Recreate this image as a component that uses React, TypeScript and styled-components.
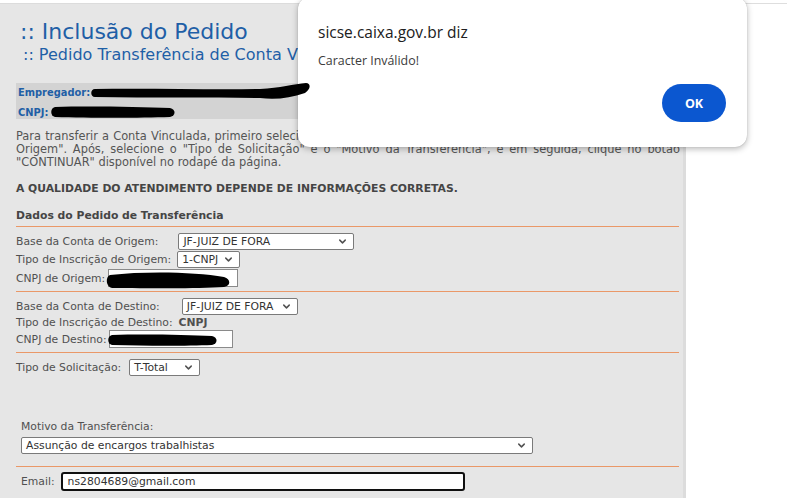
import React from "react";
import styled, { createGlobalStyle } from "styled-components";
import { ChevronDown } from "lucide-react";

const GlobalStyle = createGlobalStyle`
  html, body {
    margin: 0;
    padding: 0;
    background: #ffffff;
  }
  body {
    font-family: "DejaVu Sans", Verdana, sans-serif;
    overflow: hidden;
  }
`;

type SelectProps = { width: number; children: React.ReactNode };

const Select: React.FC<SelectProps> = ({ width, children }) => (
  <SelectBox $w={width}>
    <span>{children}</span>
    <ChevronDown size={11} strokeWidth={3.2} color="#505050" />
  </SelectBox>
);

const Redaction: React.FC<{ w: number; h: number; d: string; $left: number; $top: number }> = ({
  w,
  h,
  d,
  $left,
  $top,
}) => (
  <Scribble width={w} height={h} viewBox={`0 0 ${w} ${h}`} $left={$left} $top={$top}>
    <path d={d} fill="#000" />
  </Scribble>
);

export default function App() {
  return (
    <>
      <GlobalStyle />
      <Page>
        <Panel>
          <Header>
            <Title>:: Inclusão do Pedido</Title>
            <Subtitle>:: Pedido Transferência de Conta Vinculada</Subtitle>
          </Header>

          <Employer>
            <EmployerLine>Empregador:</EmployerLine>
            <EmployerLine>CNPJ:</EmployerLine>
            <Redaction
              w={220}
              h={20}
              $left={74}
              $top={-1}
              d="M5,7 C60,6 120,8 170,7 C190,6 204,2 216,1 C221,1 221,7 215,11 C200,16 186,18 170,16 C120,15 60,16 5,15 C0,15 0,7 5,7 Z"
            />
            <Redaction
              w={126}
              h={14}
              $left={34}
              $top={22}
              d="M5,2 C40,1 90,2 120,3 C126,4 126,11 120,12 C90,13 40,13 5,12 C0,11 0,3 5,2 Z"
            />
          </Employer>

          <Intro>
            <JustLine>
              Para transferir a Conta Vinculada, primeiro selecione a "Base da Conta de Origem", o "Tipo de Inscrição" e informe o "CNPJ de
            </JustLine>
            <JustLine>
              Origem". Após, selecione o "Tipo de Solicitação" e o "Motivo da Transferência", e em seguida, clique no botão
            </JustLine>
            <Line>"CONTINUAR" disponível no rodapé da página.</Line>
          </Intro>

          <Notice>A QUALIDADE DO ATENDIMENTO DEPENDE DE INFORMAÇÕES CORRETAS.</Notice>
          <SectionTitle>Dados do Pedido de Transferência</SectionTitle>
          <Rule />

          <Group>
            <Row $gap={20}>
              <Label>Base da Conta de Origem:</Label>
              <Select width={176}>JF-JUIZ DE FORA</Select>
            </Row>
            <Row $gap={6}>
              <Label>Tipo de Inscrição de Origem:</Label>
              <Select width={63}>1-CNPJ</Select>
            </Row>
            <Row $gap={3} $h={18}>
              <Label>CNPJ de Origem:</Label>
              <Field $w={130}>
                <Redaction
                  w={126}
                  h={18}
                  $left={-3}
                  $top={1}
                  d="M4,4 C40,0 90,1 118,6 C125,8 125,15 118,16 C90,18 40,17 6,17 C0,16 -1,6 4,4 Z"
                />
              </Field>
            </Row>
          </Group>
          <Rule />

          <Group>
            <Row $gap={22}>
              <Label>Base da Conta de Destino:</Label>
              <Select width={116}>JF-JUIZ DE FORA</Select>
            </Row>
            <Row $gap={6} $h={13}>
              <Label>Tipo de Inscrição de Destino:</Label>
              <Strong>CNPJ</Strong>
            </Row>
            <Row $gap={2} $h={18}>
              <Label>CNPJ de Destino:</Label>
              <Field $w={124}>
                <Redaction
                  w={110}
                  h={12}
                  $left={-3}
                  $top={3}
                  d="M5,1 C40,0 80,1 105,2 C111,3 111,10 105,11 C80,12 40,12 5,11 C0,10 0,2 5,1 Z"
                />
              </Field>
            </Row>
          </Group>
          <Rule />

          <Group>
            <Row $gap={8} $h={16}>
              <Label>Tipo de Solicitação:</Label>
              <Select width={71}>T-Total</Select>
            </Row>
          </Group>

          <Reason>
            <Label>Motivo da Transferência:</Label>
            <Select width={512}>Assunção de encargos trabalhistas</Select>
          </Reason>
          <Rule />

          <EmailRow>
            <Label>Email:</Label>
            <EmailInput>ns2804689@gmail.com</EmailInput>
          </EmailRow>
        </Panel>

        <Dialog>
          <DialogTitle>sicse.caixa.gov.br diz</DialogTitle>
          <DialogText>Caracter Inválido!</DialogText>
          <DialogActions>
            <OkButton>OK</OkButton>
          </DialogActions>
        </Dialog>
      </Page>
    </>
  );
}

const Page = styled.div`
  position: relative;
  width: 787px;
  height: 498px;
  padding-top: 3px;
  box-sizing: border-box;
  overflow: hidden;
`;

const Panel = styled.div`
  position: relative;
  width: 686px;
  min-height: 495px;
  box-sizing: border-box;
  padding: 0 7px 40px 16px;
  background: #e6e6e6;
  border-top: 1px solid #dcdcdc;
  border-right: 3px solid #dcdcdc;
  color: #505050;
  font-size: 10.8px;

  &::after {
    content: "";
    position: absolute;
    top: -1px;
    left: 686px;
    width: 110px;
    border-top: 1px solid #dedede;
  }
`;

const Header = styled.div`
  padding: 15px 0 0 4px;
`;

const Title = styled.h1`
  margin: 0;
  font-size: 22px;
  line-height: 26px;
  font-weight: normal;
  color: #1f5fa6;
`;

const Subtitle = styled.h2`
  margin: 0 0 0 3px;
  width: 275px;
  overflow: hidden;
  font-size: 16px;
  line-height: 20px;
  font-weight: normal;
  color: #1f5fa6;
  white-space: nowrap;
`;

const Employer = styled.div`
  position: relative;
  margin: 18px -4px 0 0;
  height: 36px;
  box-sizing: border-box;
  padding: 3px 2px 0;
  display: flex;
  flex-direction: column;
  gap: 7px;
  background: #d3d3d3;
`;

const EmployerLine = styled.div`
  font-size: 9.9px;
  line-height: 13px;
  font-weight: bold;
  color: #1f5fa6;
`;

const Scribble = styled.svg<{ $left: number; $top: number }>`
  position: absolute;
  z-index: 3;
  left: ${(p) => p.$left}px;
  top: ${(p) => p.$top}px;
  pointer-events: none;
  overflow: visible;
`;

const Intro = styled.div`
  margin: 11px -4px 0 0;
  line-height: 13px;
  font-size: 11.4px;
  color: #555;
`;

const Line = styled.div`
  white-space: nowrap;
`;

const JustLine = styled.div`
  text-align: justify;
  text-align-last: justify;
  height: 13px;
  overflow: hidden;
`;

const Notice = styled.div`
  margin-top: 13px;
  line-height: 13px;
  font-weight: bold;
  color: #454545;
  white-space: nowrap;
`;

const SectionTitle = styled.div`
  margin-top: 14px;
  line-height: 13px;
  font-weight: bold;
  color: #454545;
`;

const Rule = styled.div`
  margin-top: 4px;
  height: 0;
  border-top: 1px solid #ea9868;
  width: 663px;
`;

const Group = styled.div`
  display: flex;
  flex-direction: column;
  gap: 1px;
  padding: 6px 0 4px;

  & + ${Rule} {
    margin-top: 0;
  }
`;

const Row = styled.div<{ $gap: number; $h?: number }>`
  display: flex;
  align-items: center;
  gap: ${(p) => p.$gap}px;
  height: ${(p) => p.$h ?? 17}px;
`;

const Label = styled.span`
  line-height: 13px;
  color: #505050;
  white-space: nowrap;
`;

const Strong = styled.span`
  font-weight: bold;
  color: #505050;
`;

const SelectBox = styled.div<{ $w: number }>`
  width: ${(p) => p.$w}px;
  height: 17px;
  box-sizing: border-box;
  display: flex;
  align-items: center;
  justify-content: space-between;
  padding: 0 5px 0 4px;
  background: #ffffff;
  border: 1px solid #7a7a7a;
  border-radius: 2px;
  color: #333;
  font-size: 10.8px;
  white-space: nowrap;

  svg {
    flex: none;
  }
`;

const Field = styled.div<{ $w: number }>`
  position: relative;
  width: ${(p) => p.$w}px;
  height: 18px;
  box-sizing: border-box;
  background: #ffffff;
  border: 1px solid #8a8a8a;
`;

const Reason = styled.div`
  display: flex;
  flex-direction: column;
  align-items: flex-start;
  gap: 4px;
  margin: 41px 0 0 5px;
  padding-bottom: 12px;

  & + ${Rule} {
    margin-top: 0;
  }
`;

const EmailRow = styled.div`
  display: flex;
  align-items: center;
  gap: 6px;
  margin: 5px 0 0 5px;
`;

const EmailInput = styled.div`
  width: 404px;
  height: 19px;
  box-sizing: border-box;
  padding: 0 5px;
  display: flex;
  align-items: center;
  background: #ffffff;
  border: 2px solid #101010;
  border-radius: 3px;
  color: #333;
  font-size: 10.8px;
`;

const Dialog = styled.div`
  position: absolute;
  z-index: 2;
  left: 298px;
  top: -3px;
  width: 449px;
  height: 150px;
  box-sizing: border-box;
  padding: 25px 20px 0;
  background: #ffffff;
  border-radius: 12px;
  box-shadow: 0 2px 6px rgba(0, 0, 0, 0.28), 0 0 1px rgba(0, 0, 0, 0.25);
  font-family: "Open Sans", "Noto Sans", sans-serif;
  color: #1f1f1f;
`;

const DialogTitle = styled.div`
  font-size: 15.5px;
  line-height: 21px;
  color: #202020;
`;

const DialogText = styled.div`
  margin-top: 10px;
  font-size: 12.4px;
  line-height: 16px;
  color: #3c3c3c;
`;

const DialogActions = styled.div`
  display: flex;
  justify-content: flex-end;
  margin-top: 15px;
  padding-right: 1px;
`;

const OkButton = styled.button`
  width: 64px;
  height: 38px;
  border: none;
  border-radius: 19px;
  background: #0b57d0;
  color: #ffffff;
  font-family: "Open Sans", "Noto Sans", sans-serif;
  font-size: 12.5px;
  font-weight: bold;
`;
